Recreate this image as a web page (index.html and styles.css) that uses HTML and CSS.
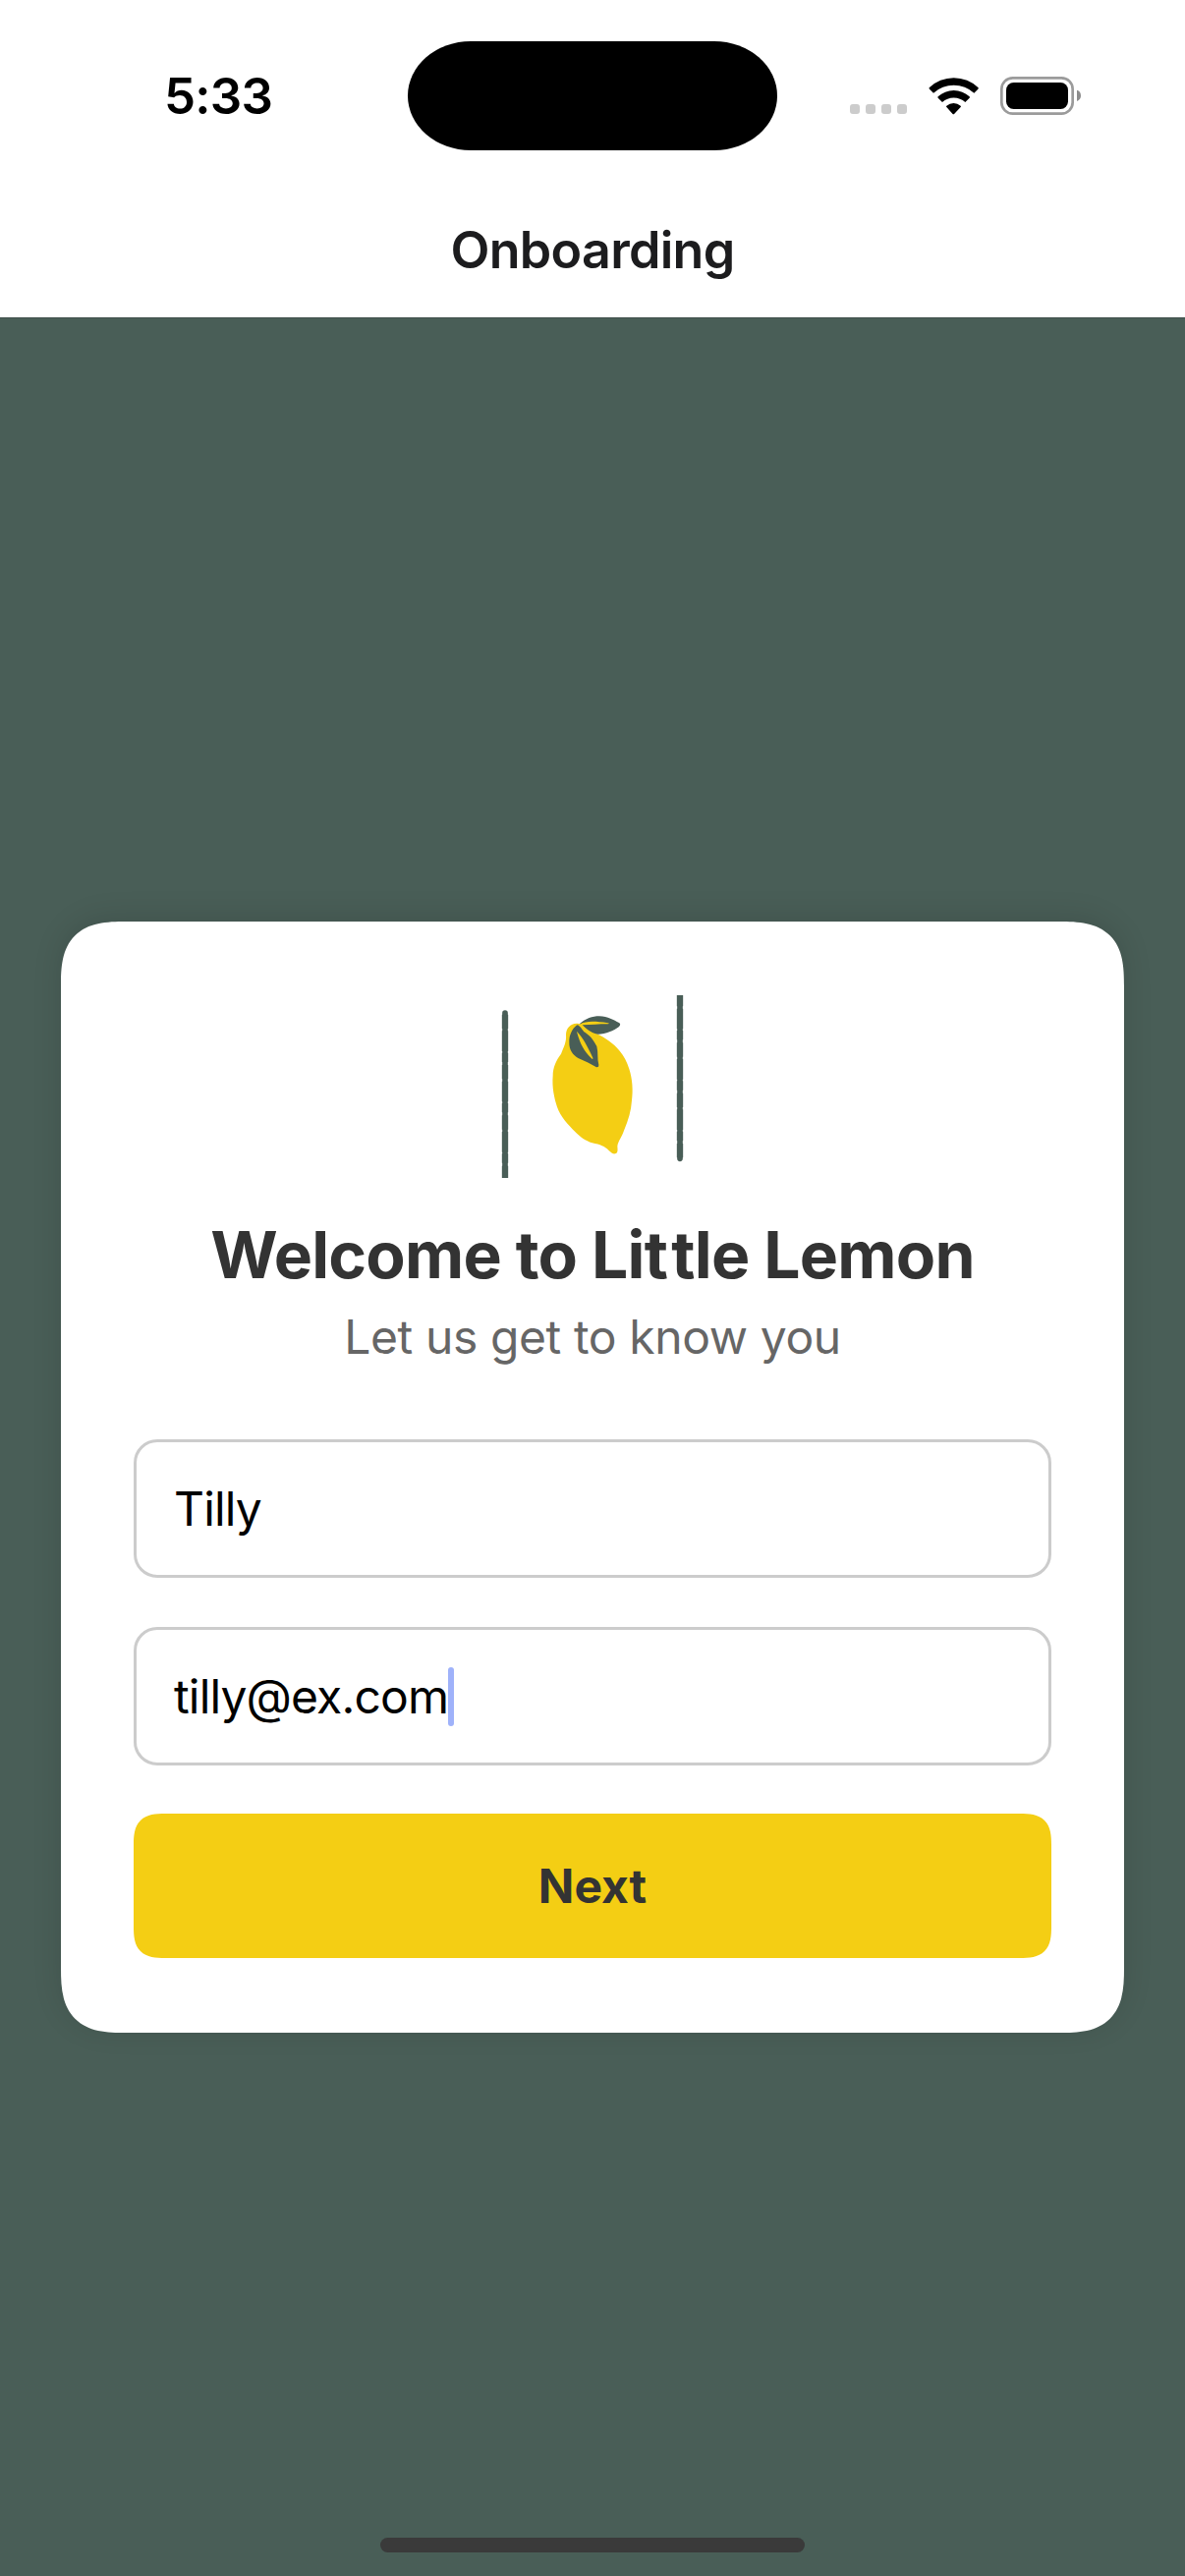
FILE: index.html
```html
<!DOCTYPE html>
<html lang="en">
<head>
<meta charset="utf-8">
<title>Onboarding</title>
<link rel="stylesheet" href="styles.css">
</head>
<body>
<div class="screen">
  <div class="status-bar">
    <span class="time">5:33</span>
    <div class="island"></div>
    <svg class="status-icons" viewBox="495 174 705 117" aria-hidden="true">
      <g fill="#ccc">
        <rect x="495" y="258" width="30" height="30" rx="9"/>
        <rect x="543" y="258" width="30" height="30" rx="9"/>
        <rect x="591" y="258" width="30" height="30" rx="9"/>
        <rect x="639" y="258" width="30" height="30" rx="9"/>
      </g>
      <path d="M737 208A108 108 0 0 1 887 208Q888 210 886 212L874 224A92 92 0 0 0 750 224L738 212Q736 210 737 208Z"/>
      <path d="M764 235A70 70 0 0 1 860 235Q862 237 860 239L847 252A52 52 0 0 0 777 252L764 239Q762 237 764 235Z"/>
      <path d="M790 263A34 34 0 0 1 833 263Q835 265 833 267L814 287Q811 290 808 287L790 267Q788 265 790 263Z"/>
      <rect x="958" y="178" width="217" height="109" rx="34" fill="none" stroke="#9b9b9b" stroke-width="8"/>
      <rect x="972" y="192" width="189" height="81" rx="23"/>
      <path d="M1188 215Q1200 219 1200 232Q1200 245 1188 249Z" fill="#8c8c8c"/>
    </svg>
  </div>
  <header class="nav">
    <h1 class="nav-title">Onboarding</h1>
  </header>
  <main class="content">
    <section class="card">
      <svg class="logo" viewBox="-6 69 690 558" role="img" aria-label="Lemon">
        <g fill="none" stroke="#495e57">
          <path d="M72 123V640M606 60V568" stroke-width="17" stroke-linecap="round"/>
          <path d="M72 128V640M606 60V565" stroke-width="19" stroke-dasharray="43 7 62 5 28 9"/>
        </g>
        <path fill="#f4ce14" d="M298 156C275 151 258 168 258 190C260 212 251 228 243 248C228 267 218 290 218 315C215 350 222 382 231 410C242 441 264 463 286 486C303 503 317 513 338 520C363 525 377 531 388 542C396 550 402 554 408 553C417 551 416 542 415 530C417 514 429 501 435 482C449 450 457 421 459 390C463 359 461 326 451 294C444 272 435 254 422 239C402 215 378 199 352 187Z"/>
        <path fill="#495e57" d="M299 157C319 140 338 133 360 133C386 134 404 145 420 153Q427 158 420 165C403 178 381 187 355 188C333 185 322 170 299 157Z"/>
        <path fill="#f4ce14" d="M299 158C321 147 345 148 386 154Q393 155 386 157C358 157 333 159 308 160L326 178L350 190L318 184L295 162Z"/>
        <path fill="#495e57" d="M290 161C277 171 267 191 268 212C267 237 280 251 295 261C315 269 336 280 351 289Q359 290 358 282C353 264 357 243 352 225C341 203 330 192 317 183C307 177 306 168 298 163Q294 158 290 161Z"/>
        <path fill="#f4ce14" d="M292 181C309 198 322 222 340 260Q341 267 335 261C313 240 302 219 292 184Q290 179 292 181Z"/>
      </svg>
      <h2 class="heading">Welcome to Li<span class="loose">t</span>tle Lemon</h2>
      <p class="subtitle">Let us get to know you</p>
      <div class="field field-name"><span>Tilly</span></div>
      <div class="field field-email"><span>tilly@ex.com</span><i class="caret"></i></div>
      <button class="next" type="button">Next</button>
    </section>
  </main>
  <div class="home-indicator"></div>
</div>
</body>
</html>
```

FILE: styles.css
```css
* { box-sizing: border-box; }

body {
  margin: 0;
  font-family: Inter, "Liberation Sans", sans-serif;
  background: #495e57;
}

.screen {
  position: relative;
  display: flex;
  flex-direction: column;
  width: 1206px;
  height: 2622px;
  overflow: hidden;
  background: #495e57;
}

.status-bar {
  position: relative;
  display: flex;
  justify-content: space-between;
  align-items: center;
  height: 186px;
  padding: 42px 106px 33px 167px;
  background: #fff;
}

.time {
  font-size: 51px;
  font-weight: 600;
  line-height: 62px;
  letter-spacing: -0.8px;
  color: #000;
}

.island {
  position: absolute;
  top: 41.5px;
  left: 415px;
  width: 376px;
  height: 111px;
  border-radius: 64px / 55.5px;
  background: #000;
}

.status-icons {
  width: 235px;
  height: 39px;
}

.nav {
  display: flex;
  justify-content: center;
  align-items: center;
  height: 137px;
  background: #fff;
}

.nav-title {
  margin: 0;
  font-size: 52px;
  font-weight: 600;
  line-height: 64px;
  letter-spacing: -0.7px;
  color: #1c1c1e;
}

.content {
  display: flex;
  flex: 1;
  flex-direction: column;
  justify-content: center;
  align-items: center;
  padding-top: 61px;
  border-top: 1px solid #3f4f4a;
}

.card {
  display: flex;
  flex-direction: column;
  align-items: center;
  width: 1082px;
  padding: 75px 74px 76px;
  border-radius: 56px;
  background: #fff;
  box-shadow: 0 -4px 30px rgba(0, 0, 0, 0.12);
}

.logo {
  width: 230px;
  height: 186px;
}

.heading {
  margin: 38px 0 0;
  font-size: 66px;
  font-weight: 700;
  line-height: 80px;
  letter-spacing: -0.8px;
  white-space: nowrap;
  color: #333;
}

/* opens up the tight double t */
.loose { letter-spacing: 3.5px; }

.subtitle {
  margin: 15px 0 75px;
  font-size: 48px;
  line-height: 58px;
  letter-spacing: -0.4px;
  white-space: nowrap;
  color: #666;
}

.field {
  display: flex;
  align-items: center;
  width: 100%;
  height: 141px;
  margin-bottom: 50px;
  padding: 0 38px;
  border: 3px solid #ccc;
  border-radius: 24px;
  font-size: 48px;
  line-height: 58px;
  letter-spacing: -0.85px;
  color: #000;
}

.field-email { margin-bottom: 49px; }

.caret {
  width: 6px;
  height: 60px;
  border-radius: 3px;
  background: #9fb2fa;
}

.next {
  width: 100%;
  height: 147px;
  padding: 0;
  border: 0;
  border-radius: 24px;
  background: #f4ce14;
  font: 700 48px/58px Inter, "Liberation Sans", sans-serif;
  color: #333;
}

.home-indicator {
  position: absolute;
  left: 387px;
  bottom: 24px;
  width: 432px;
  height: 15px;
  border-radius: 8px;
  background: #3a3a3a;
}

@supports (corner-shape: squircle) {
  .card {
    border-radius: 66px;
    corner-shape: superellipse(1.5);
  }
  .next {
    border-radius: 32px;
    corner-shape: superellipse(1.5);
  }
}
```
